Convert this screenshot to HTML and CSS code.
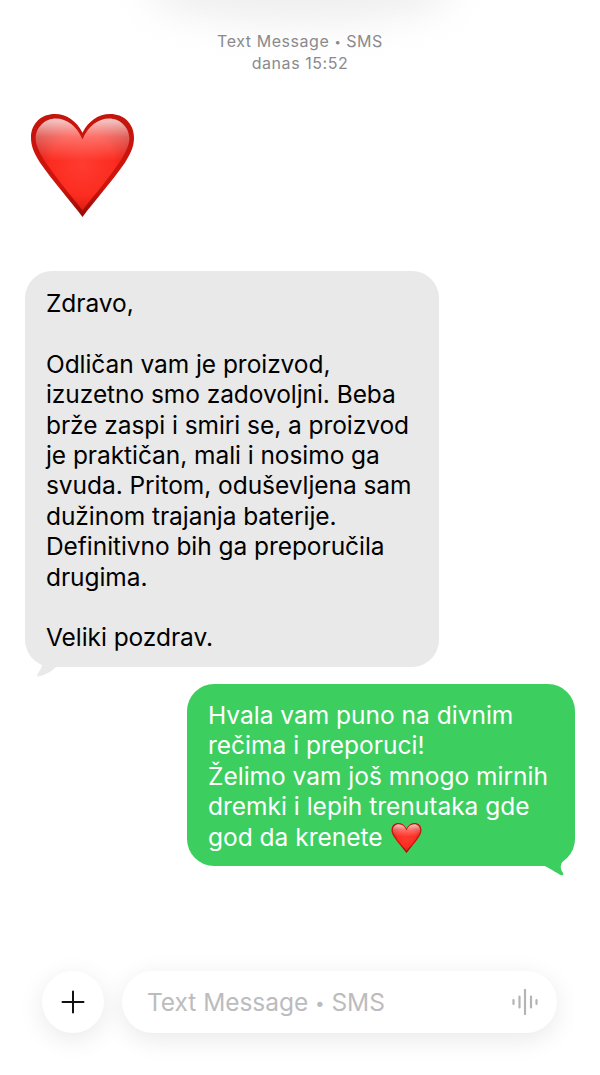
FILE: index.html
```html
<!DOCTYPE html>
<html lang="en">
<head>
  <meta charset="UTF-8">
  <meta name="viewport" content="width=device-width, initial-scale=1.0">
  <title>Messages</title>
  <link rel="stylesheet" href="styles.css">
</head>
<body>

  <!-- Shared heart emoji -->
  <svg class="defs" width="0" height="0" aria-hidden="true">
    <defs>
      <radialGradient id="heart-fill" cx="50%" cy="50%" r="62%">
        <stop offset="0" stop-color="#ff3b30"/>
        <stop offset="0.55" stop-color="#fc2c20"/>
        <stop offset="1" stop-color="#c8120a"/>
      </radialGradient>
      <linearGradient id="heart-shine" x1="0" y1="0" x2="0" y2="1">
        <stop offset="0.03" stop-color="#ffffff" stop-opacity="0.72"/>
        <stop offset="0.2" stop-color="#ffffff" stop-opacity="0.32"/>
        <stop offset="0.46" stop-color="#ffffff" stop-opacity="0"/>
      </linearGradient>
      <linearGradient id="heart-edge" x1="0" y1="0" x2="0" y2="1">
        <stop offset="0" stop-color="#c4140c"/>
        <stop offset="0.7" stop-color="#d0150c"/>
        <stop offset="1" stop-color="#960a04"/>
      </linearGradient>
      <symbol id="heart" viewBox="0 0 104 104">
        <path fill="url(#heart-edge)" d="M52 104 C40 88 22 68 9 49 C2 38 0 31 0 24 C0 9 11 0 24 0 C36 0 46 7 52 19 C58 7 68 0 80 0 C93 0 104 9 104 24 C104 31 102 38 95 49 C82 68 64 88 52 104 Z"/>
        <g transform="translate(52 48) scale(0.965) translate(-52 -48)">
          <path fill="url(#heart-fill)" d="M52 99 C41 85 25 66 12 47 C6 37 3 30 3 24 C3 12 13 3 24 3 C36 3 46 11 52 25 C58 11 68 3 80 3 C91 3 101 12 101 24 C101 30 98 37 92 47 C79 66 63 85 52 99 Z"/>
          <path fill="url(#heart-shine)" d="M52 99 C41 85 25 66 12 47 C6 37 3 30 3 24 C3 12 13 3 24 3 C36 3 46 11 52 25 C58 11 68 3 80 3 C91 3 101 12 101 24 C101 30 98 37 92 47 C79 66 63 85 52 99 Z"/>
        </g>
      </symbol>
    </defs>
  </svg>

  <div class="top-glow"></div>

  <main class="thread">
    <header class="thread-info">
      <p>Text Message <span class="dot">•</span> SMS</p>
      <p>danas 15:52</p>
    </header>

    <svg class="big-heart"><use href="#heart"/></svg>

    <div class="bubble incoming">
      <p>Zdravo,<br><br>Odličan vam je proizvod,<br>izuzetno smo zadovoljni. Beba<br>brže zaspi i smiri se, a proizvod<br>je praktičan, mali i nosimo ga<br>svuda. Pritom, oduševljena sam<br>dužinom trajanja baterije.<br>Definitivno bih ga preporučila<br>drugima.<br><br>Veliki pozdrav.</p>
      <svg class="tail" width="32" height="17" viewBox="0 0 32 17"><path fill="#e9e9e9" d="M18 0 C17 5 15 8 12.500 12 C11.500 13.500 12.500 15 14 14.500 C20 13 26 10 31 5 L31 0 Z"/></svg>
    </div>

    <div class="bubble outgoing">
      <p>Hvala vam puno na divnim<br>rečima i preporuci!<br>Želimo vam još mnogo mirnih<br>dremki i lepih trenutaka gde<br>god da krenete <svg class="small-heart"><use href="#heart"/></svg></p>
      <svg class="tail" width="36" height="30" viewBox="0 0 36 30"><path fill="#3ccf60" d="M0 16 C6 19 15 24 20.500 27.500 C23 29 25.500 28 24 26 C21 22 21 18 24 14 C28 10 30 6 30 0 L0 0 Z"/></svg>
    </div>
  </main>

  <!-- Compose bar -->
  <footer class="compose">
    <button class="add-btn" type="button" aria-label="Add">
      <svg width="24" height="24" viewBox="0 0 24 24"><path d="M12 1.500 V22.500 M1.500 12 H22.500" stroke="#111" stroke-width="2" stroke-linecap="round"/></svg>
    </button>
    <div class="field">
      <span class="placeholder">Text Message <span class="dot">•</span> SMS</span>
      <svg width="26" height="26" viewBox="0 0 26 26"><path d="M1.500 11 V15 M7.500 7.500 V18.500 M13 1 V25 M19 7.500 V18.500 M24.500 11 V15" stroke="#b4b4b6" stroke-width="2.200" stroke-linecap="round"/></svg>
    </div>
  </footer>

</body>
</html>
```
FILE: styles.css
```css
/* General body styles */
body {
  font-family: 'Inter', 'Liberation Sans', sans-serif;
  background-color: #fff;
  color: #000;
  margin: 0;
  width: 600px;
  height: 1075px;
  position: relative;
  overflow: hidden;
  display: flex;
  flex-direction: column;
}

p {
  margin: 0;
}

.defs {
  position: absolute;
}

.dot {
  font-size: 0.7em;
  vertical-align: 0.1em;
}

/* Faint shadow under the cut off nav bar */
.top-glow {
  position: absolute;
  top: -46px;
  left: 145px;
  width: 310px;
  height: 70px;
  border-radius: 50%;
  background-color: #efefef;
  filter: blur(18px);
}

/* Message thread */
.thread {
  flex: 1;
  display: flex;
  flex-direction: column;
  position: relative;
  padding: 31px 25px 0;
}

.thread-info {
  text-align: center;
  font-size: 16px;
  line-height: 21px;
  letter-spacing: 0.55px;
  color: #8a8a8e;
}

.big-heart {
  display: block;
  width: 103px;
  height: 103px;
  margin: 40px 0 54px 6px;
}

.small-heart {
  display: inline-block;
  width: 31px;
  height: 30px;
  vertical-align: -7px;
  margin-left: 1px;
}

/* Bubbles */
.bubble {
  position: relative;
  border-radius: 27px;
  padding: 17px 21px 14px 21px;
  font-size: 24.5px;
  line-height: 30.4px;
  box-sizing: border-box;
}

.incoming {
  align-self: flex-start;
  width: 414px;
  height: 396px;
  letter-spacing: -0.06px;
  background-color: #e9e9e9;
  color: #000;
}

.outgoing {
  align-self: flex-end;
  width: 388px;
  height: 182px;
  margin-top: 17px;
  padding-top: 16px;
  background-color: #3ccf60;
  color: #fff;
}

.tail {
  position: absolute;
}

.incoming .tail {
  left: 0;
  bottom: -12px;
}

.outgoing .tail {
  right: 0;
  bottom: -11px;
}

/* Compose bar */
.compose {
  position: absolute;
  top: 971px;
  left: 42px;
  right: 43px;
  display: flex;
  gap: 18px;
  align-items: center;
}

.add-btn {
  flex: none;
  width: 62px;
  height: 62px;
  padding: 0;
  border: none;
  border-radius: 50%;
  background-color: #fff;
  box-shadow: 0 6px 26px rgba(0, 0, 0, 0.09);
  display: flex;
  align-items: center;
  justify-content: center;
}

.field {
  flex: 1;
  height: 62px;
  border-radius: 31px;
  background-color: #fff;
  box-shadow: 0 6px 26px rgba(0, 0, 0, 0.09);
  display: flex;
  align-items: center;
  justify-content: space-between;
  padding: 0 19px 0 25px;
}

.placeholder {
  font-size: 24.5px;
  letter-spacing: -0.05px;
  color: #bcbcbe;
}
```
